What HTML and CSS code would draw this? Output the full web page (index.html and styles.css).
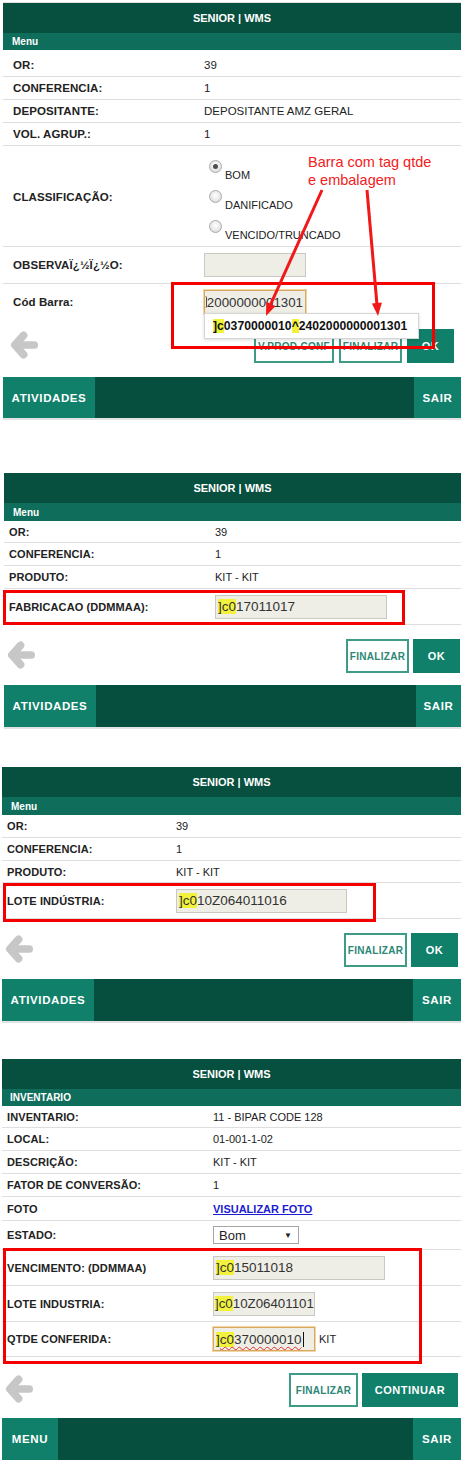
FILE: index.html
```html
<!DOCTYPE html>
<html lang="pt">
<head>
<meta charset="utf-8">
<title>SENIOR | WMS</title>
<link rel="stylesheet" href="styles.css">
</head>
<body>
<div class="page">

  <!-- Screen 1 -->
  <div class="screen s1">
    <div class="hdr">SENIOR | WMS</div>
    <div class="sub">Menu</div>
    <div class="row r-first"><div class="lbl">OR:</div><div class="val">39</div></div>
    <div class="row"><div class="lbl">CONFERENCIA:</div><div class="val">1</div></div>
    <div class="row"><div class="lbl">DEPOSITANTE:</div><div class="val">DEPOSITANTE AMZ GERAL</div></div>
    <div class="row"><div class="lbl">VOL. AGRUP.:</div><div class="val">1</div></div>
    <div class="row r-class">
      <div class="lbl">CLASSIFICAÇÃO:</div>
      <div class="val opts">
        <div class="opt"><span class="radio on"></span><span class="otxt">BOM</span></div>
        <div class="opt"><span class="radio"></span><span class="otxt">DANIFICADO</span></div>
        <div class="opt"><span class="radio"></span><span class="otxt">VENCIDO/TRUNCADO</span></div>
      </div>
    </div>
    <div class="row r-obs"><div class="lbl">OBSERVAÏ¿½Ï¿½O:</div><div class="val"><div class="inp w102"></div></div></div>
    <div class="row r-barra"><div class="lbl">Cód Barra:</div><div class="val"><div class="inp w102 focus endclip"><span class="sliver"></span><span>2000000001301</span></div></div></div>
    <div class="actions">
      <svg class="back" viewBox="0 0 30 30" width="29" height="30"><polyline points="14,5 5,15 14,25" fill="none" stroke="#c7c7c7" stroke-width="8" stroke-linecap="round" stroke-linejoin="round"/><line x1="6" y1="15" x2="25" y2="15" stroke="#c7c7c7" stroke-width="8" stroke-linecap="round"/></svg>
      <div class="btns">
        <div class="btn out w80">V.PROD.CONF</div>
        <div class="btn out w63">FINALIZAR</div>
        <div class="btn fill w47">OK</div>
      </div>
    </div>
    <div class="foot"><div class="fb w92">ATIVIDADES</div><div class="fmid"></div><div class="fb w47f">SAIR</div></div>

    <div class="dropdown"><span class="hl">]c</span>0370000010<span class="hl">^</span>2402000000001301</div>
    <div class="redbox rb1"></div>
    <div class="note">Barra com tag qtde<br>e embalagem</div>
    <svg class="arrows" width="458" height="420" viewBox="0 0 458 420">
      <line x1="319" y1="187" x2="266" y2="305" stroke="#f01818" stroke-width="3"/>
      <polygon points="263,313 272.5,303.1 263.3,299" fill="#f01818"/>
      <line x1="364" y1="187" x2="374" y2="302" stroke="#f01818" stroke-width="3"/>
      <polygon points="375,313 378.9,299.6 368.9,300.5" fill="#f01818"/>
    </svg>
  </div>

  <!-- Screen 2 -->
  <div class="screen s2">
    <div class="hdr">SENIOR | WMS</div>
    <div class="sub">Menu</div>
    <div class="row h22"><div class="lbl">OR:</div><div class="val">39</div></div>
    <div class="row"><div class="lbl">CONFERENCIA:</div><div class="val">1</div></div>
    <div class="row"><div class="lbl">PRODUTO:</div><div class="val">KIT - KIT</div></div>
    <div class="row h36"><div class="lbl">FABRICACAO (DDMMAA):</div><div class="val"><div class="inp w172"><span class="hl">]c0</span>17011017</div></div></div>
    <div class="actions">
      <svg class="back" viewBox="0 0 30 30" width="29" height="30"><polyline points="14,5 5,15 14,25" fill="none" stroke="#c7c7c7" stroke-width="8" stroke-linecap="round" stroke-linejoin="round"/><line x1="6" y1="15" x2="25" y2="15" stroke="#c7c7c7" stroke-width="8" stroke-linecap="round"/></svg>
      <div class="btns">
        <div class="btn out w63">FINALIZAR</div>
        <div class="btn fill w47">OK</div>
      </div>
    </div>
    <div class="foot"><div class="fb w92">ATIVIDADES</div><div class="fmid"></div><div class="fb w45f">SAIR</div></div>
    <div class="redbox rb2"></div>
  </div>

  <!-- Screen 3 -->
  <div class="screen s3">
    <div class="hdr">SENIOR | WMS</div>
    <div class="sub">Menu</div>
    <div class="row"><div class="lbl">OR:</div><div class="val">39</div></div>
    <div class="row"><div class="lbl">CONFERENCIA:</div><div class="val">1</div></div>
    <div class="row h22"><div class="lbl">PRODUTO:</div><div class="val">KIT - KIT</div></div>
    <div class="row h36"><div class="lbl">LOTE INDÚSTRIA:</div><div class="val"><div class="inp w171"><span class="hl">]c0</span>10Z064011016</div></div></div>
    <div class="actions">
      <svg class="back" viewBox="0 0 30 30" width="29" height="30"><polyline points="14,5 5,15 14,25" fill="none" stroke="#c7c7c7" stroke-width="8" stroke-linecap="round" stroke-linejoin="round"/><line x1="6" y1="15" x2="25" y2="15" stroke="#c7c7c7" stroke-width="8" stroke-linecap="round"/></svg>
      <div class="btns">
        <div class="btn out w63">FINALIZAR</div>
        <div class="btn fill w47">OK</div>
      </div>
    </div>
    <div class="foot"><div class="fb w92">ATIVIDADES</div><div class="fmid"></div><div class="fb w48f">SAIR</div></div>
    <div class="redbox rb3"></div>
  </div>

  <!-- Screen 4 -->
  <div class="screen s4">
    <div class="hdr">SENIOR | WMS</div>
    <div class="sub">INVENTARIO</div>
    <div class="row h22"><div class="lbl">INVENTARIO:</div><div class="val">11 - BIPAR CODE 128</div></div>
    <div class="row"><div class="lbl">LOCAL:</div><div class="val">01-001-1-02</div></div>
    <div class="row"><div class="lbl">DESCRIÇÃO:</div><div class="val">KIT - KIT</div></div>
    <div class="row"><div class="lbl">FATOR DE CONVERSÃO:</div><div class="val">1</div></div>
    <div class="row h24"><div class="lbl">FOTO</div><div class="val"><a class="link" href="#">VISUALIZAR FOTO</a></div></div>
    <div class="row h29"><div class="lbl">ESTADO:</div><div class="val"><div class="select"><span>Bom</span><span class="caret">▼</span></div></div></div>
    <div class="row h36"><div class="lbl">VENCIMENTO: (DDMMAA)</div><div class="val"><div class="inp w172"><span class="hl">]c0</span>15011018</div></div></div>
    <div class="row h36"><div class="lbl">LOTE INDUSTRIA:</div><div class="val"><div class="inp w102 tight"><span class="hl">]c0</span>10Z06401101</div></div></div>
    <div class="row h35"><div class="lbl">QTDE CONFERIDA:</div><div class="val inl"><div class="inp w102 focus"><span class="hl">]</span><span class="spell"><span class="hl">c0</span>370000010</span><span class="cursor"></span></div><span class="unit">KIT</span></div></div>
    <div class="actions">
      <svg class="back" viewBox="0 0 30 30" width="29" height="30"><polyline points="14,5 5,15 14,25" fill="none" stroke="#c7c7c7" stroke-width="8" stroke-linecap="round" stroke-linejoin="round"/><line x1="6" y1="15" x2="25" y2="15" stroke="#c7c7c7" stroke-width="8" stroke-linecap="round"/></svg>
      <div class="btns">
        <div class="btn out w69">FINALIZAR</div>
        <div class="btn fill w96">CONTINUAR</div>
      </div>
    </div>
    <div class="foot"><div class="fb w56">MENU</div><div class="fmid"></div><div class="fb w48f">SAIR</div></div>
    <div class="redbox rb4"></div>
  </div>

</div>
</body>
</html>
```

FILE: styles.css
```css
html, body {
  margin: 0;
  padding: 0;
  background: #ffffff;
}
body {
  width: 468px;
  font-family: "Liberation Sans", Arial, sans-serif;
  color: #222222;
  font-size: 11px;
}
.page {
  display: flex;
  flex-direction: column;
}
.screen {
  position: relative;
  display: flex;
  flex-direction: column;
  --pl: 5px;
  --lc: 206px;
  --pr: 1px;
}
.s1 { margin: 3px 7px 0 3px; --pl: 10px; --lc: 191px; --pr: 7px; font-size: 11.5px; box-shadow: 0 -1px 0 #e2e2e2; }
.s2 { margin: 55px 7px 0 4px; --pl: 5px; --lc: 206px; --pr: 1px; }
.s3 { margin: 40px 7px 0 2px; --pl: 5px; --lc: 169px; --pr: 3px; }
.s4 { margin: 38px 7px 0 2px; --pl: 5px; --lc: 206px; --pr: 3px; }

.hdr {
  height: 30px;
  background: #074f3e;
  color: #ffffff;
  font-weight: bold;
  font-size: 11px;
  display: flex;
  align-items: center;
  justify-content: center;
}
.sub {
  height: 18px;
  background: #0e6d5b;
  color: #ffffff;
  font-weight: bold;
  font-size: 10px;
  display: flex;
  align-items: center;
  padding-left: 9px;
}
.s1 .sub { height: 17px; }
.s4 .sub { height: 17px; padding-left: 8px; }

.row {
  display: grid;
  grid-template-columns: var(--lc) 1fr;
  padding-left: var(--pl);
  align-items: center;
  box-sizing: border-box;
  height: 23px;
  border-bottom: 1px solid #dedede;
}
.row.h22 { height: 22px; }
.row.h24 { height: 24px; }
.row.h29 { height: 29px; }
.row.h35 { height: 35px; }
.row.h36 { height: 36px; }
.r-first { height: 27px; padding-top: 4px; }
.r-class { height: 101px; }
.r-obs { height: 37px; }
.r-barra { height: 36px; border-bottom: none; }

.lbl {
  font-weight: bold;
  letter-spacing: 0.1px;
  white-space: nowrap;
}
.val {
  white-space: nowrap;
}
.val.inl {
  display: flex;
  align-items: center;
}

.opts {
  align-self: start;
  padding-top: 11px;
  display: flex;
  flex-direction: column;
}
.opt {
  height: 30px;
  display: flex;
  align-items: flex-start;
}
.radio {
  width: 11px;
  height: 11px;
  margin: 3px 0 0 5px;
  border-radius: 50%;
  border: 1px solid #a9a9a9;
  background: radial-gradient(circle at 50% 40%, #ffffff 0%, #e6e6e6 60%, #cfcfcf 100%);
  position: relative;
  flex: none;
}
.radio.on::after {
  content: "";
  position: absolute;
  left: 3px;
  top: 3px;
  width: 5px;
  height: 5px;
  border-radius: 50%;
  background: #4d4d4d;
}
.otxt {
  margin: 12px 0 0 3px;
  line-height: 12px;
  font-size: 11px;
}

.inp {
  height: 24px;
  box-sizing: border-box;
  border: 1px solid #c9c9c1;
  background: #eeeee6;
  font-size: 13.5px;
  color: #333333;
  padding: 0 2px;
  display: flex;
  align-items: center;
  white-space: nowrap;
  overflow: hidden;
}
.inp.tight { padding: 0 1px; font-size: 13.3px; }
.inp.focus {
  border: 1px solid #dba860;
  box-shadow: 0 0 0 1px #f0d6a6;
}
.inp.endclip {
  justify-content: space-between;
  font-size: 13.3px;
  padding: 0 2px 0 0;
}
.sliver {
  display: block;
  width: 2px;
  height: 12px;
  border-right: 1px solid #4a4a4a;
  border-radius: 0 4px 4px 0;
}
.w102 { width: 102px; }
.w171 { width: 171px; }
.w172 { width: 172px; }

.hl { background: #f2f23c; }
.spell {
  text-decoration: underline wavy #e03030;
  text-decoration-thickness: 1px;
  text-underline-offset: 2px;
}
.cursor {
  display: inline-block;
  width: 1px;
  height: 15px;
  background: #111111;
  margin-left: 1px;
}
.unit {
  margin-left: 4px;
  font-size: 11px;
}
.link {
  color: #1c1cd0;
  font-weight: bold;
  text-decoration: underline;
}
.select {
  width: 86px;
  height: 18px;
  box-sizing: border-box;
  border: 1px solid #a6a6a6;
  background: #ffffff;
  display: flex;
  align-items: center;
  justify-content: space-between;
  padding: 0 6px 0 5px;
  font-size: 13px;
  color: #222222;
}
.caret { font-size: 8px; }

.actions {
  display: flex;
  align-items: flex-start;
  justify-content: space-between;
  margin-top: 14px;
  padding-right: var(--pr);
  padding-left: 3px;
}
.s1 .actions { margin-top: 9px; padding-left: 7px; }
.s4 .actions { margin-top: 16px; }
.back { margin-top: 1px; }
.btns {
  display: flex;
  gap: 4px;
}
.s1 .btns { gap: 5px; }
.btn {
  height: 34px;
  box-sizing: border-box;
  display: flex;
  align-items: center;
  justify-content: center;
  font-weight: bold;
  font-size: 10px;
  letter-spacing: 0.3px;
}
.btn.out {
  border: 2px solid #3e9b88;
  color: #2c8775;
  background: #ffffff;
}
.btn.fill {
  background: #10806a;
  color: #ffffff;
  font-size: 11px;
  letter-spacing: 0.5px;
}
.w47 { width: 47px; }
.w63 { width: 63px; }
.w69 { width: 69px; }
.w80 { width: 80px; }
.w96 { width: 96px; }

.foot {
  display: flex;
  height: 42px;
  margin-top: 12px;
  background: #064f3e;
  box-shadow: 0 2px 0 #e3e3e3;
}
.s1 .foot { margin-top: 14px; height: 41px; }
.s4 .foot { margin-top: 11px; }
.fb {
  background: #10806a;
  color: #ffffff;
  font-weight: bold;
  font-size: 11.5px;
  letter-spacing: 0.6px;
  display: flex;
  align-items: center;
  justify-content: center;
}
.fmid { flex: 1; }
.w92 { width: 92px; }
.w56 { width: 56px; }
.w45f { width: 45px; }
.w47f { width: 47px; }
.w48f { width: 48px; }

/* overlays */
.redbox {
  position: absolute;
  border: 3px solid #f50000;
  box-sizing: border-box;
  pointer-events: none;
}
.rb1 { left: 168px; top: 279px; width: 264px; height: 67px; }
.rb2 { left: -1px; top: 117px; width: 402px; height: 35px; }
.rb3 { left: 1px; top: 116px; width: 373px; height: 39px; }
.rb4 { left: 1px; top: 189px; width: 419px; height: 116px; }

.dropdown {
  position: absolute;
  left: 201px;
  top: 310px;
  width: 215px;
  height: 26px;
  box-sizing: border-box;
  background: #ffffff;
  border: 1px solid #d6d6d6;
  box-shadow: 0 1px 3px rgba(0,0,0,0.15);
  font-weight: bold;
  font-size: 12.2px;
  color: #111111;
  display: flex;
  align-items: center;
  padding-left: 8px;
  white-space: nowrap;
}
.note {
  position: absolute;
  left: 305px;
  top: 150px;
  color: #f22020;
  font-size: 14.5px;
  line-height: 18px;
  white-space: nowrap;
}
.arrows {
  position: absolute;
  left: 0;
  top: 0;
  pointer-events: none;
}
```
